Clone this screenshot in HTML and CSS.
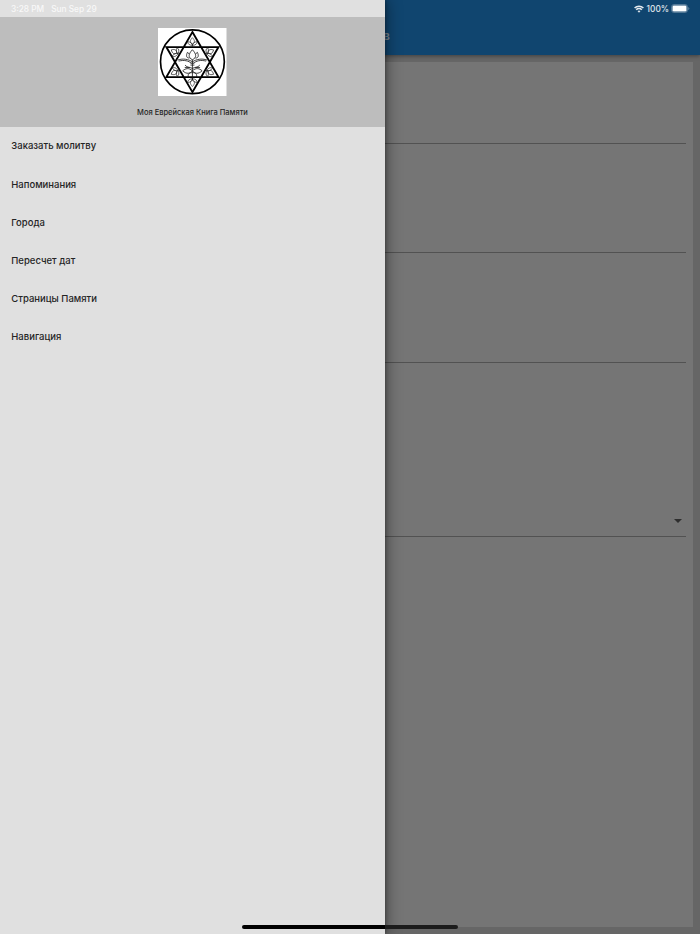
FILE: index.html
```html
<!DOCTYPE html>
<html lang="ru">
<head>
    <meta charset="UTF-8">
    <meta name="viewport" content="width=device-width, initial-scale=1.0">
    <title>Моя Еврейская Книга Памяти</title>
    <link rel="stylesheet" href="styles.css">
</head>
<body>
    <!-- Страница под меню -->
    <div class="page">
        <header class="app-bar">
            <span class="app-title">в</span>
        </header>
        <main class="content">
            <form class="card">
                <div class="field field-first"></div>
                <div class="field"></div>
                <div class="field"></div>
                <div class="field field-select"><span class="arrow"></span></div>
            </form>
        </main>
    </div>

    <!-- Боковое меню -->
    <aside class="drawer">
        <div class="drawer-header">
            <svg class="logo" viewBox="0 0 205 205">
                <rect width="205" height="205" fill="#fff"/>
                <g fill="none" stroke="#000">
                    <circle cx="103" cy="101" r="95.5" stroke-width="5"/>
                    <path d="M103 12L181 147H25Z M103 192L25 57H181Z" stroke-width="5.5"/>
                    <g stroke="#222" stroke-width="2">
                        <path id="leaf" d="M103 29C95 37 95 43 103 48C111 43 111 37 103 29M103 48V57M103 52C94 52 88 47 89 41C98 41 102 47 103 52C104 47 108 41 117 41C118 47 112 52 103 52"/>
                        <use href="#leaf" transform="rotate(60 103 102)"/>
                        <use href="#leaf" transform="rotate(120 103 102)"/>
                        <use href="#leaf" transform="rotate(180 103 102)"/>
                        <use href="#leaf" transform="rotate(240 103 102)"/>
                        <use href="#leaf" transform="rotate(300 103 102)"/>
                    </g>
                    <g stroke="#111" stroke-width="2.4">
                        <path d="M103 65C91 78 89 88 103 95C117 88 115 78 103 65M103 95V155"/>
                        <path d="M94 90C84 90 84 82 88 73L93 77M112 90C122 90 122 82 118 73L113 77"/>
                        <path d="M59 96C76 90 91 94 103 101C115 94 130 90 147 96M62 99C78 95 92 98 100 106M144 99C128 95 114 98 106 106"/>
                        <path d="M103 121C95 116 88 120 81 111M103 121C111 116 118 120 125 111M80 118H94M126 118H112"/>
                        <path d="M103 128C92 118 82 121 74 128C85 139 97 137 103 128C114 118 124 121 132 128C121 139 109 137 103 128"/>
                        <path d="M103 134C94 132 88 139 91 146M103 134C112 132 118 139 115 146M97 105H109M97 111H109"/>
                    </g>
                </g>
            </svg>
            <div class="drawer-title">Моя Еврейская Книга Памяти</div>
        </div>
        <nav class="menu">
            <a class="menu-item">Заказать молитву</a>
            <a class="menu-item">Напоминания</a>
            <a class="menu-item">Города</a>
            <a class="menu-item">Пересчет дат</a>
            <a class="menu-item">Страницы Памяти</a>
            <a class="menu-item">Навигация</a>
        </nav>
    </aside>

    <!-- Строка состояния -->
    <div class="status-bar">
        <span class="status-time">3:28 PM</span>
        <span class="status-date">Sun Sep 29</span>
        <svg class="wifi" viewBox="0 0 10 8">
            <g fill="none" stroke="#e3e9ee" stroke-width="1.6">
                <path d="M.6 3A6.3 6.3 0 0 1 9.4 3M2.2 4.8A4 4 0 0 1 7.8 4.8"/>
            </g>
            <path d="M3.5 6.1Q5 4.9 6.5 6.1L5 7.7Z" fill="#e3e9ee"/>
        </svg>
        <span class="status-percent">100%</span>
        <svg class="battery" viewBox="0 0 19 9">
            <rect x=".6" y=".6" width="15.8" height="7.8" rx="2.2" fill="none" stroke="#6f8da6" stroke-width=".8"/>
            <rect x="1.5" y="1.5" width="14" height="6" rx="1.3" fill="#fff"/>
            <path d="M17.3 3V6Q18.3 5.5 18.3 4.5T17.3 3" fill="#6f8da6"/>
        </svg>
    </div>
    <div class="home-indicator"></div>
</body>
</html>
```
FILE: styles.css
```css
body {
    margin: 0;
    height: 934px;
    position: relative;
    overflow: hidden;
    font-family: Inter, "Liberation Sans", sans-serif;
    color: #252525;
}

/* Страница под меню */
.page {
    height: 934px;
    display: flex;
    flex-direction: column;
    background: #666;
}

.app-bar {
    height: 55px;
    flex: none;
    box-sizing: border-box;
    padding: 28px 0 0 383px;
    background: #10456f;
    box-shadow: 0 1px 4px rgba(0, 0, 0, 0.4);
    position: relative;
}

.app-title {
    display: block;
    font-size: 12px;
    line-height: 16px;
    font-weight: 600;
    color: #7b8791;
}

.content {
    flex: 1;
    display: flex;
    padding: 7px;
}

.card {
    flex: 1;
    padding: 0 7px;
    background: #757575;
}

.field {
    height: 109.5px;
    box-sizing: border-box;
    border-bottom: 1px solid #525252;
}

.field-first {
    height: 81.5px;
}

.field-select {
    height: 174px;
    display: flex;
    justify-content: flex-end;
    align-items: flex-end;
    padding: 0 4px 13px 0;
}

.arrow {
    border: 4px solid transparent;
    border-top: 4px solid #2e2e2e;
    border-bottom: 0;
}

/* Боковое меню */
.drawer {
    position: absolute;
    top: 0;
    left: 0;
    width: 385px;
    height: 934px;
    box-sizing: border-box;
    padding-top: 17px;
    background: #e0e0e0;
    box-shadow: 2px 0 14px rgba(0, 0, 0, 0.4), 1px 0 3px rgba(0, 0, 0, 0.25);
}

.drawer-header {
    height: 110px;
    box-sizing: border-box;
    padding-top: 10.5px;
    display: flex;
    flex-direction: column;
    align-items: center;
    background: #bdbdbd;
}

.logo {
    width: 68.5px;
    height: 68.5px;
}

.drawer-title {
    margin-top: 12px;
    font-size: 7.5px;
    line-height: 10px;
    font-weight: 500;
}

.menu {
    padding-top: 0.4px;
}

.menu-item {
    display: block;
    height: 38.2px;
    padding-left: 11.3px;
    font-size: 9.5px;
    line-height: 38.2px;
    font-weight: 500;
}

/* Строка состояния */
.status-bar {
    position: absolute;
    top: 0;
    left: 0;
    width: 700px;
    height: 17px;
    box-sizing: border-box;
    padding: 0 11px;
    display: flex;
    align-items: center;
    font-size: 8.3px;
    font-weight: 500;
    color: #f8f8f8;
}

.status-date {
    margin-left: 7px;
}

.wifi {
    width: 10px;
    height: 8px;
    margin-left: auto;
}

.status-percent {
    margin: 0 2px 0 3px;
    color: #e3e9ee;
}

.battery {
    width: 19px;
    height: 9px;
    margin-right: -1px;
}

/* Индикатор внизу экрана */
.home-indicator {
    position: absolute;
    left: 242px;
    bottom: 5.5px;
    width: 216px;
    height: 4px;
    border-radius: 2px;
    background: linear-gradient(to right, #000 143px, #1c1c1c 143px);
}
```
